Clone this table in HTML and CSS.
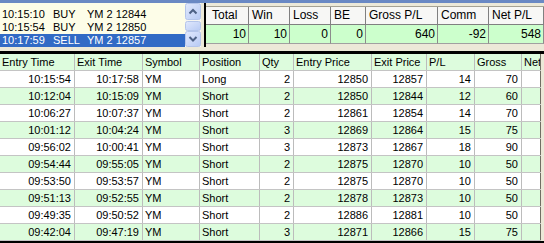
FILE: index.html
```html
<!DOCTYPE html>
<html>
<head>
<meta charset="utf-8">
<link rel="stylesheet" href="styles.css">
</head>
<body>
<div class="topbar"></div>
<div class="top">
  <div class="orders">
    <div class="order"><span class="t">10:15:10</span><span class="s">BUY</span><span>YM 2 12844</span></div>
    <div class="order"><span class="t">10:15:54</span><span class="s">BUY</span><span>YM 2 12850</span></div>
    <div class="order sel"><span class="t">10:17:59</span><span class="s">SELL</span><span>YM 2 12857</span></div>
  </div>
  <div class="vscroll">
    <svg width="16" height="44" viewBox="0 0 16 44">
      <defs>
        <linearGradient id="btn" x1="0" y1="0" x2="1" y2="1">
          <stop offset="0" stop-color="#e1e9fd"/>
          <stop offset="1" stop-color="#b7caf4"/>
        </linearGradient>
      </defs>
      <rect x="0" y="0" width="16" height="44" fill="#f6f6f0"/>
      <rect x="0.5" y="0.5" width="15" height="16" rx="2" fill="url(#btn)" stroke="#b4c5ea"/>
      <path d="M4.5 10.5 L8 7 L11.5 10.5" fill="none" stroke="#4d6185" stroke-width="2"/>
      <rect x="0.5" y="18.5" width="15" height="9" rx="2" fill="url(#btn)" stroke="#b4c5ea"/>
      <rect x="0.5" y="28.5" width="15" height="15" rx="2" fill="url(#btn)" stroke="#b4c5ea"/>
      <path d="M4.5 34 L8 37.5 L11.5 34" fill="none" stroke="#4d6185" stroke-width="2"/>
    </svg>
  </div>
  <div class="splitter"></div>
  <div class="stats">
    <div class="stats-grid">
      <div class="sh">Total</div>
      <div class="sh">Win</div>
      <div class="sh">Loss</div>
      <div class="sh">BE</div>
      <div class="sh">Gross P/L</div>
      <div class="sh">Comm</div>
      <div class="sh">Net P/L</div>
      <div class="sd">10</div>
      <div class="sd">10</div>
      <div class="sd">0</div>
      <div class="sd">0</div>
      <div class="sd">640</div>
      <div class="sd">-92</div>
      <div class="sd">548</div>
    </div>
  </div>
</div>
<div class="sep"></div>
<div class="rule"></div>
<div class="trades">
  <div class="tr head">
    <div>Entry Time</div><div>Exit Time</div><div>Symbol</div><div>Position</div><div>Qty</div><div>Entry Price</div><div>Exit Price</div><div>P/L</div><div>Gross</div><div>Net</div>
  </div>
  <div class="tr">
    <div class="r">10:15:54</div><div class="r">10:17:58</div><div>YM</div><div>Long</div><div class="r">2</div><div class="r">12850</div><div class="r">12857</div><div class="r">14</div><div class="r">70</div><div></div>
  </div>
  <div class="tr alt">
    <div class="r">10:12:04</div><div class="r">10:15:09</div><div>YM</div><div>Short</div><div class="r">2</div><div class="r">12850</div><div class="r">12844</div><div class="r">12</div><div class="r">60</div><div></div>
  </div>
  <div class="tr">
    <div class="r">10:06:27</div><div class="r">10:07:37</div><div>YM</div><div>Short</div><div class="r">2</div><div class="r">12861</div><div class="r">12854</div><div class="r">14</div><div class="r">70</div><div></div>
  </div>
  <div class="tr alt">
    <div class="r">10:01:12</div><div class="r">10:04:24</div><div>YM</div><div>Short</div><div class="r">3</div><div class="r">12869</div><div class="r">12864</div><div class="r">15</div><div class="r">75</div><div></div>
  </div>
  <div class="tr">
    <div class="r">09:56:02</div><div class="r">10:00:41</div><div>YM</div><div>Short</div><div class="r">3</div><div class="r">12873</div><div class="r">12867</div><div class="r">18</div><div class="r">90</div><div></div>
  </div>
  <div class="tr alt">
    <div class="r">09:54:44</div><div class="r">09:55:05</div><div>YM</div><div>Short</div><div class="r">2</div><div class="r">12875</div><div class="r">12870</div><div class="r">10</div><div class="r">50</div><div></div>
  </div>
  <div class="tr">
    <div class="r">09:53:50</div><div class="r">09:53:57</div><div>YM</div><div>Short</div><div class="r">2</div><div class="r">12875</div><div class="r">12870</div><div class="r">10</div><div class="r">50</div><div></div>
  </div>
  <div class="tr alt">
    <div class="r">09:51:13</div><div class="r">09:52:55</div><div>YM</div><div>Short</div><div class="r">2</div><div class="r">12878</div><div class="r">12873</div><div class="r">10</div><div class="r">50</div><div></div>
  </div>
  <div class="tr">
    <div class="r">09:49:35</div><div class="r">09:50:52</div><div>YM</div><div>Short</div><div class="r">2</div><div class="r">12886</div><div class="r">12881</div><div class="r">10</div><div class="r">50</div><div></div>
  </div>
  <div class="tr alt">
    <div class="r">09:42:04</div><div class="r">09:47:19</div><div>YM</div><div>Short</div><div class="r">3</div><div class="r">12871</div><div class="r">12866</div><div class="r">15</div><div class="r">75</div><div></div>
  </div>
</div>
<div class="foot"></div>
</body>
</html>
```

FILE: styles.css
```css
html, body {
  margin: 0;
  padding: 0;
}
body {
  width: 544px;
  height: 243px;
  overflow: hidden;
  background: #ece9d8;
  font-family: "Liberation Sans", Arial, sans-serif;
  font-size: 11px;
  color: #000;
}
.topbar {
  height: 3px;
  background: #6a89c4;
}
.top {
  display: flex;
  height: 44px;
}
.orders {
  width: 185px;
  background: #fdfde8;
  padding-top: 5px;
  box-sizing: border-box;
}
.order {
  display: flex;
  height: 13px;
  line-height: 13px;
  padding-left: 2px;
  white-space: nowrap;
}
.order .t { width: 51px; }
.order .s { width: 34px; }
.order.sel {
  background: #316ac5;
  color: #fff;
}
.vscroll {
  width: 16px;
  height: 44px;
}
.vscroll svg { display: block; }
.splitter {
  width: 3px;
  border-right: 2px solid #000;
}
.stats {
  flex: 1;
  padding-top: 3px;
}
.stats-grid {
  display: grid;
  grid-template-columns: 43px 41px 41px 35px 72px 51px 55px;
  border-top: 1px solid #a5a294;
  font-size: 12px;
}
.sh {
  box-sizing: border-box;
  height: 18px;
  line-height: 17px;
  padding-left: 3px;
  background: #f7f7f5;
  border-right: 1px solid #808080;
  border-bottom: 1px solid #808080;
  white-space: nowrap;
}
.sh:first-child { padding-left: 6px; }
.sd {
  box-sizing: border-box;
  height: 19px;
  line-height: 18px;
  padding-right: 2px;
  text-align: right;
  background: #ccffcc;
  border-right: 1px solid #8c8c8c;
  border-bottom: 1px solid #a0a0a0;
}
.sep { height: 4px; }
.rule {
  height: 3px;
  background: #000;
}
.trades {
  width: 541px;
  background: #fff;
}
.tr {
  display: grid;
  grid-template-columns: 75px 68px 57px 60px 34px 78px 55px 48px 47px 19px;
  height: 17px;
  box-sizing: border-box;
  border-bottom: 1px solid #c4c4c4;
  background: #fff;
}
.tr.alt, .tr.head { background: #ddfcdd; }
.tr > div {
  box-sizing: border-box;
  border-right: 1px solid #bcbcbc;
  line-height: 16px;
  padding: 0 2px;
  overflow: hidden;
  white-space: nowrap;
}
.tr > div:last-child { border-right-color: #716f64; }
.tr > .r {
  text-align: right;
  padding-right: 3px;
}
.foot {
  height: 2px;
  background: #000;
}
```
